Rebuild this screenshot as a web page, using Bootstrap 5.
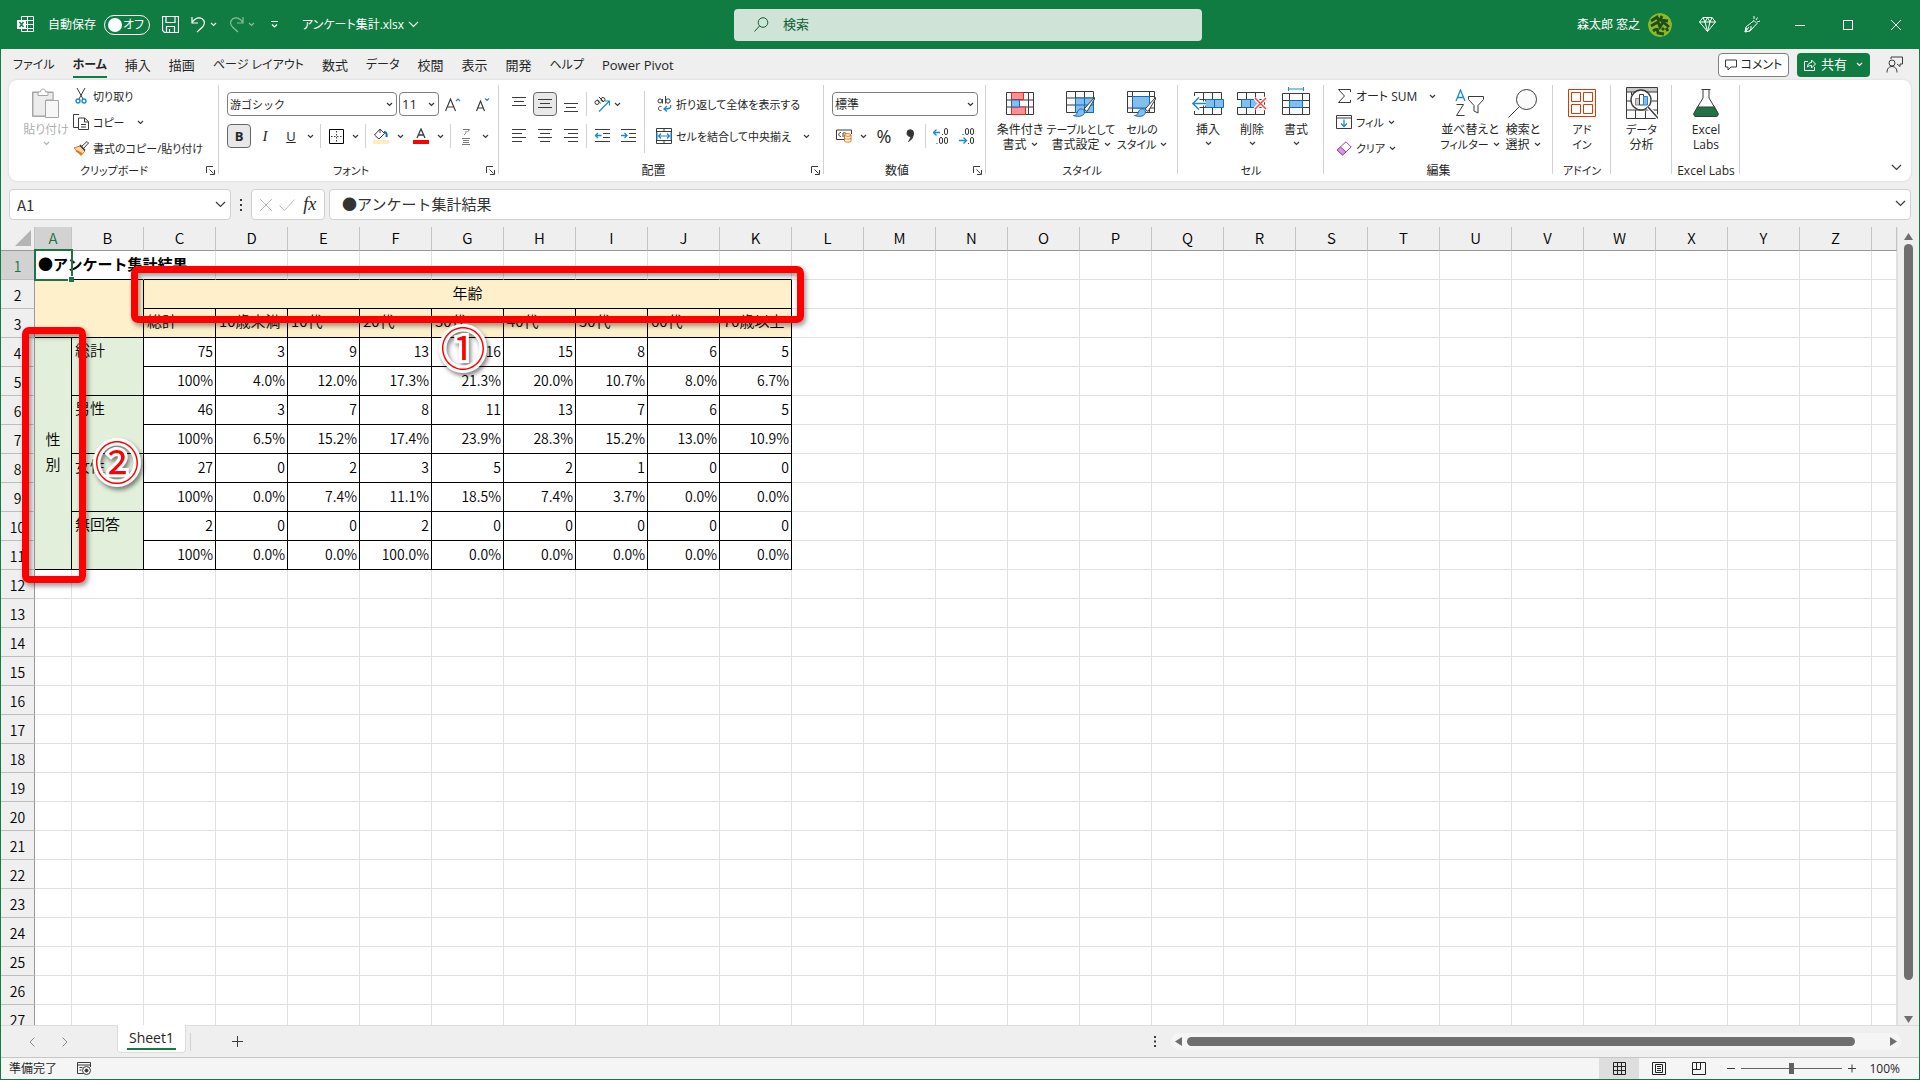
<!DOCTYPE html>
<html lang="ja">
<head>
<meta charset="utf-8">
<meta name="viewport" content="width=device-width, initial-scale=1">
<title>アンケート集計.xlsx</title>
<link href="https://cdn.jsdelivr.net/npm/bootstrap@5.3.0/dist/css/bootstrap.min.css" rel="stylesheet">
<style>
:root{--xl-green:#107c41;--xl-ink:#262626;--xl-chrome:#efefef}
body{font-family:"Open Sans","Noto Sans CJK JP",sans-serif;font-size:12px;line-height:15px;color:var(--xl-ink);font-feature-settings:"palt"}
svg{display:block;flex:none;fill:none;stroke:#3b3b3b}
button{font:inherit;color:inherit}
.app-window{border:solid var(--xl-green);border-width:0 1px 1px;background:var(--xl-chrome)}
.title-bar{height:49px;background:var(--xl-green);color:#fff;margin:0 -1px}
.title-bar svg{stroke:#fff}
.title-side{flex:1 1 0;min-width:0}
.app-mark{margin:0 14px 0 17px}
.quick{margin-left:12px}
.file-name{margin-left:24px}
.plain{border:0;background:none;padding:0;display:inline-flex;align-items:center;justify-content:center;white-space:nowrap}
.auto-pill{width:46px;height:20px;border:1px solid #fff;border-radius:10px;padding:0 5px 0 3px}
.auto-pill input{appearance:none;width:14px;height:14px;border-radius:50%;background:#fff;margin:0}
.search-area{width:468px;height:32px;background:#cfe3d7;border-radius:4px;color:#0c5f32;padding-left:20px;margin-left:16px;gap:14px}
.search-area svg{stroke:#0c5f32}
.search-area input{border:0;background:none;outline:0;color:inherit;font-size:13px;padding:0}
.search-area input::placeholder{color:#0c5f32;opacity:1}
.face{width:24px;height:24px;border-radius:50%}
.pen{width:20px;margin-right:14px}
.cap-btn{width:48px;height:48px}
.tab-bar{height:31px;padding-left:12px;font-size:13px}
.tab-list{gap:18px}
.tab-bar a{color:var(--xl-ink);text-decoration:none;line-height:22px;height:26px;padding-top:2px;white-space:nowrap}
.tab-bar a.current{font-weight:700;border-bottom:2px solid var(--xl-green)}
.tab-bar a.kana{font-size:12px}
.kana-s{font-size:11px}
.pill-btn{height:24px;border-radius:4px}
.comment-btn{width:71px;background:#fff;border:1px solid #7f7f7f;gap:4px;font-size:12px}
.share-btn{width:73px;background:var(--xl-green);color:#fff;gap:5px;font-size:13px}
.share-btn svg{stroke:#fff}
.ribbon{height:101px;margin:0 8px;background:#fff;border-radius:8px;box-shadow:0 0 2px #c8c8c8}
.rgroup{display:flex;flex-direction:column;background:linear-gradient(#d1d1d1,#d1d1d1) no-repeat right 5px/1px 89px;position:relative}
.rbody{height:82px;display:flex}
.pad6{padding-left:6px}.pad8{padding-left:8px}.pad14{padding-left:14px}
.rlabel{height:18px;line-height:18px;text-align:center;white-space:nowrap}
.launch{position:absolute;right:4px;bottom:6px}
.w-clip{width:210px}.w-font{width:280px}.w-align{width:325px}.w-num{width:162px}.w-style{width:192px}.w-cell{width:146px}.w-edit{width:229px}.w-add{width:58px}.w-ana{width:61px}.w-labs{width:68px}
.line-col{display:flex;flex-direction:column;padding-top:3px}
.line-col button{height:26px;justify-content:flex-start}
.ic-slot{width:24px;display:flex;justify-content:center;align-items:center;flex:none}
.gap-caret{margin-left:12px}
.tool-rows{padding:12px 0 0 8px;display:flex;flex-direction:column;gap:8px}
.tool-row{display:flex;gap:2px;height:24px}
.tb{width:24px;height:24px;border-radius:4px}
.tb.on{background:#e8e8e8;border:1px solid #666}
.splitb{width:38px;height:24px;justify-content:flex-start}
.vline{width:1px;background:#d1d1d1;margin:0 1px}
.vtall{width:1px;height:62px;background:#d1d1d1;margin:11px 3px 0 4px}
.combo{appearance:none;height:24px;border:1px solid #7f7f7f;border-radius:4px;font-size:12px;padding:0 12px 0 2px;color:#262626;background:#fff url("data:image/svg+xml,%3Csvg xmlns='http://www.w3.org/2000/svg' width='7' height='5'%3E%3Cpath d='M1 1l2.500 2.500L6 1' fill='none' stroke='%23333' stroke-width='1.200'/%3E%3C/svg%3E") no-repeat right 3px center}
.combo-name{width:170px;font-size:11px}.combo-size{width:40px;font-size:13px}.combo-num{width:146px}
.big{display:flex;flex-direction:column;align-items:center;justify-content:flex-start;padding-top:6px;line-height:15px}
.big .pic{height:34px;display:flex;align-items:center;margin-bottom:2px}
.w46{width:46px}.w44{width:44px}.w50{width:50px}.w52{width:52px}.w56{width:56px}.w66{width:66px}.w110{width:110px}
.dim{color:#b0b0b0}
.formula-row{padding:8px 8px 7px;height:46px}
.fbox{height:31px;background:#fff;border:1px solid #d0d0d0;border-radius:4px}
.fbox input{border:0;outline:0;background:none;color:#333;font-size:15px;padding:0;min-width:0;font-family:"Noto Sans CJK JP",sans-serif;font-feature-settings:normal}
.name-box{width:222px;padding:0 4px 0 7px}
.fx-box{width:74px}
.fx-box button{font:italic 18px "Liberation Serif",serif}
.text-box{margin-left:4px;padding:0 4px 2px 12px}
.sheet-zone{flex:1 1 0;min-height:0;position:relative}
.grid-clip{overflow:hidden;flex:1;min-width:0}
.cells{table-layout:fixed;width:100%;border-collapse:separate;border-spacing:0;font-family:"Noto Sans CJK JP",sans-serif;font-size:14px;line-height:20px;color:#000;font-weight:350;font-feature-settings:normal;background:#fff}
.cells th,.cells td{padding:0;box-sizing:border-box;border:solid #e0e0e0;border-width:0 1px 1px 0;white-space:nowrap}
.cells thead th{height:24px;background:var(--xl-chrome);border-color:#999 #c4c4c4 #999 #999;text-align:center;font-weight:350;font-size:15px;padding-bottom:1px}
.cells tbody tr{height:29px}
.cells tbody th{background:var(--xl-chrome);border-color:#999 #999 #bdbdbd;text-align:center;font-weight:350;padding-top:2px}
.cells .active-h{background:#d2d2d2;color:#217346}
.cells td.num{text-align:right;padding:0 2px 2px 0}
.cells td.bk{border-color:#000}
.cells td.cream,.cells td.green{font-size:15px}
.cells td.top-l{vertical-align:top;padding:2px 0 0 3px}
.cells td.green{background:#e2efda}
.cells td.cream{background:#fff0cc}
.cells td.mid{text-align:center;padding-bottom:2px}
.cells td.stack{text-align:center;line-height:25px;padding-bottom:6px}
.cells td.kline{border-bottom-color:#000}
.cells td.noedge{border-right-color:transparent}
.cells .sel{position:relative;padding:0 0 2px 3px;font-weight:700;font-size:15px;overflow:visible}
.sel::before{content:"";position:absolute;inset:-2px -2px -2px -1px;border:2px solid #217346;z-index:2}
.sel::after{content:"";position:absolute;right:-3px;bottom:-3px;width:6px;height:6px;background:#217346;border:solid #fff;border-width:1px 0 0 1px;z-index:3}
.vscroll{width:21px;display:flex;flex-direction:column;align-items:center;padding:6px 0 2px;gap:4px;border-left:1px solid #e0e0e0;margin-right:1px}
.vthumb{width:9px;height:736px;border-radius:5px;background:#6f6f6f}
.red-frame{position:absolute;border:7px solid #f00;border-radius:7px;box-shadow:2px 3px 5px #0006,inset 2px 3px 5px #0006;z-index:5}
.frame-age{left:130px;top:39px;width:673px;height:57px}
.frame-sex{left:21px;top:100px;width:64px;height:256px}
.callout{position:absolute;z-index:6;width:48px;text-align:center;font:400 45px/48px "Noto Sans CJK JP",sans-serif;color:#f00;-webkit-text-stroke:6px #fff;paint-order:stroke fill;filter:drop-shadow(2px 3px 2px #0007)}
.call-one{left:438px;top:96px}
.call-two{left:92px;top:210px}
.sheet-bar{height:32px;border-top:1px solid #dcdcdc}
.sheet-nav{width:116px;padding-left:28px;gap:27px}
.sheet-tab{width:69px;height:28px;background:#fff;border:1px solid #dcdcdc;border-top:0;border-radius:0 0 4px 4px;margin-top:-1px;font-size:14px;color:var(--xl-ink);text-decoration:none}
.sheet-tab span{border-bottom:2px solid var(--xl-green);padding:0 2px;line-height:20px}
.tab-edge{height:18px;margin-left:4px}
.add-sheet{margin-left:40px}
.hscroll{width:730px;height:17px;background:#f5f5f5;border-radius:9px;margin-right:18px;padding:0 4px}
.hthumb{width:668px;height:9px;border-radius:5px;background:#6f6f6f;margin:0 5px}
.status{height:22px;background:#f5f5f5;border-top:1px solid #c6c6c6;padding:0 19px 0 8px}
.macro{margin-left:20px}
.view{width:40px;height:21px}
.view.on{background:#dedede}
.zoom-range{appearance:none;width:101px;height:13px;margin:0 6px;background:linear-gradient(#666,#666) no-repeat center/100% 1px}
.zoom-range::-webkit-slider-thumb{appearance:none;width:5px;height:11px;background:#616161}
.fold{margin:0 9px 10px 0}
</style>
</head>
<body>
<svg width="0" height="0" class="position-absolute" aria-hidden="true">
  <symbol id="cv" viewBox="0 0 7 5"><path d="M1 1l2.500 2.500L6 1" stroke-width="1.200"/></symbol>
  <symbol id="cvl" viewBox="0 0 11 7"><path d="M1 1l4.500 4.500L10 1" stroke-width="1.200"/></symbol>
  <symbol id="launch" viewBox="0 0 9 9"><path d="M.5 7V.5H7M3.500 3.500l4 4M8.500 4v4.500H4" /></symbol>
  <symbol id="brush" viewBox="0 0 24 22"><path d="M22.500 1.500L12 13l3 2.500L22.500 3z" fill="#fff"/><path d="M1.500 19.500c4 0 3-3 5-5.500 2-2 6-1 6 2 0 4-6 5.500-11 3.500z" fill="#83beec" stroke="#0f6cbd"/></symbol>
</svg>
<div class="app-window vh-100 d-flex flex-column overflow-hidden">

  <header class="title-bar d-flex align-items-center">
    <div class="title-side d-flex align-items-center">
      <svg class="app-mark" width="17" height="17" viewBox="0 0 17 17"><path d="M4.500 4V.5h12v15h-12V13M4.500 4.500h12M8 8.500h8.500M8 12.500h8.500M10.500.5v15"/><path d="M0 4h9v9H0z" fill="#fff" stroke="none"/><path d="M2.500 6l4 5M6.500 6l-4 5" stroke="#107c41" stroke-width="1.400"/></svg>
      <label for="autosave">自動保存</label>
      <label class="auto-pill d-flex align-items-center justify-content-between ms-2"><input id="autosave" type="checkbox" role="switch"><span>オフ</span></label>
      <button class="plain quick" aria-label="上書き保存"><svg width="17" height="17" viewBox="0 0 17 17"><path d="M.5.5h16v16h-14l-2-2zM4 .5v6h9v-6M4.500 16.500v-6h8v6M7.500 16v-3" stroke-width="1.200"/></svg></button>
      <button class="plain quick gap-1" aria-label="元に戻す"><svg width="15" height="17" viewBox="0 0 15 17"><path d="M1 1v6h6M1 6.500C4 2 8 .5 11.500 3c3 2.500 2 6 0 8L6 16" stroke-width="1.200"/></svg><svg width="7" height="5"><use href="#cv"/></svg></button>
      <button class="plain quick gap-1 opacity-50" aria-label="やり直し"><svg width="15" height="17" viewBox="0 0 15 17"><path d="M14 1v6H8M14 6.500C11 2 7 .5 3.500 3c-3 2.500-2 6 0 8L9 16" stroke-width="1.200"/></svg><svg width="7" height="5"><use href="#cv"/></svg></button>
      <button class="plain ms-3" aria-label="クイック アクセス ツール バーのカスタマイズ"><svg width="7" height="8" viewBox="0 0 7 8"><path d="M0 .5h7M1 3.500l2.500 2.500L6 3.500" stroke-width="1.200"/></svg></button>
      <button class="plain gap-1 file-name">アンケート集計.xlsx <svg width="11" height="7"><use href="#cvl"/></svg></button>
    </div>
    <div class="search-area d-flex align-items-center">
      <svg width="15" height="15" viewBox="0 0 15 15"><circle cx="9" cy="5.500" r="4.800"/><path d="M5.500 9L.5 14.500"/></svg>
      <input type="search" placeholder="検索" aria-label="検索">
    </div>
    <div class="title-side d-flex align-items-center justify-content-end">
      <span class="me-2">森太郎 窓之</span>
      <svg class="face" viewBox="0 0 24 24"><circle cx="12" cy="12" r="12" fill="#8cb82b" stroke="none"/><path d="M3 8l6-4 2 4M14 3l-2 4 8 1M3 13l7-4 2 5 3-5 6 5M5 18l3-2M9 15l1 5 6 1M14 15l2 2M18 15l2 3" stroke="#1f4d16" stroke-width="2.800"/></svg>
      <button class="plain" style="width:70px" aria-label="Premium"><svg width="17" height="15" viewBox="0 0 17 15"><path d="M4 .5h9l3.500 4.500-8 9.500L.5 5zM.5 5h16M4 .5L6 5l2.500 9.500L11 5l2-4.500M6 5l2.500-4.500L11 5"/></svg></button>
      <button class="plain pen" aria-label="新機能"><svg width="17" height="17" viewBox="0 0 17 17"><path d="M10 4.500l3 3L6 15l-5 1 1-5zM5 11l-3 4M7 10v3l-2 2M10 3V0M12 4l1.500-2.500M13 6l3-1M1 16l2-4"/></svg></button>
      <button class="plain cap-btn" aria-label="最小化"><svg width="10" height="10" viewBox="0 0 10 10"><path d="M0 5.500h10"/></svg></button>
      <button class="plain cap-btn" aria-label="最大化"><svg width="10" height="10" viewBox="0 0 10 10"><rect x=".5" y=".5" width="9" height="9"/></svg></button>
      <button class="plain cap-btn" aria-label="閉じる"><svg width="10" height="10" viewBox="0 0 10 10"><path d="M0 0l10 10M10 0L0 10"/></svg></button>
    </div>
  </header>

  <nav class="tab-bar d-flex align-items-center" aria-label="リボン タブ">
    <div class="d-flex flex-fill tab-list">
      <a href="#" class="kana">ファイル</a><a href="#" class="current kana">ホーム</a><a href="#">挿入</a><a href="#">描画</a><a href="#" class="kana">ページ レイアウト</a><a href="#">数式</a><a href="#" class="kana">データ</a><a href="#">校閲</a><a href="#">表示</a><a href="#">開発</a><a href="#" class="kana">ヘルプ</a><a href="#">Power Pivot</a>
    </div>
    <button class="plain pill-btn comment-btn me-2"><svg width="12" height="12" viewBox="0 0 12 12"><path d="M.5 1h11v7H6l-3 3V8H.5z"/></svg>コメント</button>
    <button class="plain pill-btn share-btn"><svg width="12" height="13" viewBox="0 0 12 13"><path d="M4 3.500H.5v9h10V9M3.500 9c0-3 2-4.500 4-4.500V2l4 4-4 4V7.500c-2 0-3 .5-4 1.500z"/></svg>共有<svg width="7" height="5" class="ms-1"><use href="#cv"/></svg></button>
    <button class="plain mx-3" aria-label="アカウント"><svg width="17" height="17" viewBox="0 0 17 17"><path d="M5 3V1h11.500v7H14v2.500L11 8"/><circle cx="6" cy="7" r="3"/><path d="M1 16.500c0-4 2-6 5-6s5 2 5 6"/></svg></button>
  </nav>

  <section class="ribbon d-flex" aria-label="リボン">
    <div class="rgroup w-clip">
      <div class="rbody pad14">
        <button class="plain big w46 dim"><span class="pic"><svg width="28" height="30" viewBox="0 0 28 30"><path d="M7 4H.5v24.500H13M14 4h7v8" stroke="#a5a5a5" fill="#eee"/><path d="M1 4.500h20V12h-7v16H1z" fill="#ececec" stroke="#a5a5a5"/><path d="M6 7.500V4h2.500c0-4 5-4 5 0H16v3.500z" fill="#fff" stroke="#a5a5a5"/><path d="M13.500 12.500h13v17h-13z" fill="#f7f7f7" stroke="#a5a5a5"/></svg></span>貼り付け<svg width="7" height="5" class="mt-1" style="stroke:#b0b0b0"><use href="#cv"/></svg></button>
        <div class="line-col kana-s">
          <button class="plain"><span class="ic-slot"><svg width="12" height="16" viewBox="0 0 12 16"><path d="M2 0l6 11M10 0L4 11"/><circle cx="3" cy="13" r="2" stroke="#1e88d2" stroke-width="1.400"/><circle cx="9" cy="13" r="2" stroke="#1e88d2" stroke-width="1.400"/></svg></span>切り取り</button>
          <button class="plain"><span class="ic-slot"><svg width="16" height="16" viewBox="0 0 16 16"><path d="M6 .5H.5v13H5M5.500 4h6l4 3.500v8h-10zM11.500 4v4h4M8 10.500h5M8 13h5"/></svg></span>コピー<svg width="7" height="5" class="gap-caret"><use href="#cv"/></svg></button>
          <button class="plain"><span class="ic-slot"><svg width="16" height="15" viewBox="0 0 16 15"><path d="M8 6l6-5.500L15.500 2 10 8" fill="#fff"/><path d="M1 7l6-2 5 5-4 4.500z" fill="#fbd6b5" stroke="#e8710a"/><path d="M3 9.500l6 3.500" stroke="#e8710a" stroke-width="2"/><path d="M7 4l5 5.500" stroke-width="1.600"/></svg></span>書式のコピー/貼り付け</button>
        </div>
      </div>
      <div class="rlabel kana-s">クリップボード</div><svg class="launch" width="9" height="9"><use href="#launch"/></svg>
    </div>

    <div class="rgroup w-font">
      <div class="rbody"><div class="tool-rows">
        <div class="tool-row">
          <select class="combo combo-name" aria-label="フォント"><option>游ゴシック</option></select>
          <select class="combo combo-size" aria-label="フォント サイズ"><option>11</option></select>
          <button class="plain tb" aria-label="フォント サイズの拡大"><svg width="16" height="15" viewBox="0 0 16 15"><path d="M.5 14L5.500 2l5 12M2 10h7" stroke-width="1.200"/><path d="M11 4l2-2 2 2" stroke="#1e88d2" stroke-width="1.200"/></svg></button>
          <button class="plain tb ms-1" aria-label="フォント サイズの縮小"><svg width="16" height="15" viewBox="0 0 16 15"><path d="M1.500 14L5.500 4l4 10M3 11h5" stroke-width="1.200"/><path d="M10 1.500l2 2 2-2" stroke="#1e88d2" stroke-width="1.200"/></svg></button>
        </div>
        <div class="tool-row">
          <button class="plain tb on fw-bold" style="font-size:13px">B</button>
          <button class="plain tb fst-italic" style="font-size:15px;font-family:'Liberation Serif',serif">I</button>
          <button class="plain splitb"><span class="ic-slot text-decoration-underline" style="font-size:13px">U</span><svg width="7" height="5" class="ms-1"><use href="#cv"/></svg></button>
          <span class="vline"></span>
          <button class="plain splitb" aria-label="罫線"><span class="ic-slot"><svg width="15" height="15" viewBox="0 0 15 15"><path d="M.5.5h14v14H.5z" stroke="#000"/><path d="M7.500 2v12M2 7.500h12" stroke-dasharray="1.500 1.500"/></svg></span><svg width="7" height="5" class="ms-1"><use href="#cv"/></svg></button>
          <span class="vline"></span>
          <button class="plain splitb" aria-label="塗りつぶしの色"><span class="ic-slot"><svg width="16" height="16" viewBox="0 0 16 16"><path d="M7 1L1.500 7 6 11l5.500-5.500zM7 1v4" /><path d="M11 4c2.500 0 3 2 2.500 5" stroke="#0f6cbd" stroke-width="2"/><path d="M0 12h16v4H0z" fill="#ffecc0" stroke="none"/></svg></span><svg width="7" height="5" class="ms-1"><use href="#cv"/></svg></button>
          <button class="plain splitb" aria-label="フォントの色"><span class="ic-slot"><svg width="16" height="16" viewBox="0 0 16 16"><path d="M4 10l4-9 4 9M5.500 7h5" stroke-width="1.300"/><path d="M0 12h16v4H0z" fill="#f00" stroke="none"/></svg></span><svg width="7" height="5" class="ms-1"><use href="#cv"/></svg></button>
          <span class="vline"></span>
          <button class="plain splitb" aria-label="ふりがな"><span class="ic-slot"><svg width="12" height="17" viewBox="0 0 12 17"><path d="M3 1.500h6.500L7.500 4M6 3c0 2-.5 3-2 4M2 10.500h8M3 12.500h6M3 14.500h6M2 16.500h8" stroke="#777"/></svg></span><svg width="7" height="5" class="ms-1"><use href="#cv"/></svg></button>
        </div>
      </div></div>
      <div class="rlabel kana-s pe-3">フォント</div><svg class="launch" width="9" height="9"><use href="#launch"/></svg>
    </div>

    <div class="rgroup w-align">
      <div class="rbody">
        <div class="tool-rows">
          <div class="tool-row">
            <button class="plain tb" aria-label="上揃え"><svg width="14" height="20" viewBox="0 0 14 20"><path d="M0 3.500h14M2 7.500h10M0 11.500h14"/></svg></button>
            <button class="plain tb on" aria-label="上下中央揃え"><svg width="14" height="20" viewBox="0 0 14 20"><path d="M0 5.500h14M2 9.500h10M0 13.500h14"/></svg></button>
            <button class="plain tb" aria-label="下揃え"><svg width="14" height="20" viewBox="0 0 14 20"><path d="M0 9.500h14M2 13.500h10M0 17.500h14"/></svg></button>
            <span class="vline"></span>
            <button class="plain splitb" aria-label="方向"><span class="ic-slot"><svg width="16" height="16" viewBox="0 0 16 16"><circle cx="3" cy="6.500" r="2"/><path d="M3.500 3.500l3 4M5 1l5 5"/><circle cx="9" cy="3.500" r="2"/><path d="M5 15.500L15 5.500M11 5h4.500v4.500" stroke="#1e88d2" stroke-width="1.200"/></svg></span><svg width="7" height="5"><use href="#cv"/></svg></button>
          </div>
          <div class="tool-row">
            <button class="plain tb" aria-label="左揃え"><svg width="14" height="14" viewBox="0 0 14 14"><path d="M0 .5h14M0 4.500h10M0 8.500h14M0 12.500h10"/></svg></button>
            <button class="plain tb" aria-label="中央揃え"><svg width="14" height="14" viewBox="0 0 14 14"><path d="M0 .5h14M2 4.500h10M0 8.500h14M2 12.500h10"/></svg></button>
            <button class="plain tb" aria-label="右揃え"><svg width="14" height="14" viewBox="0 0 14 14"><path d="M0 .5h14M4 4.500h10M0 8.500h14M4 12.500h10"/></svg></button>
            <span class="vline"></span>
            <button class="plain tb" aria-label="インデントを減らす"><svg width="15" height="14" viewBox="0 0 15 14"><path d="M0 .5h15M8 4.500h7M8 8.500h7M0 12.500h15"/><path d="M6.500 6.500h-6M3 4L.5 6.500 3 9" stroke="#1e88d2" stroke-width="1.300"/></svg></button>
            <button class="plain tb" aria-label="インデントを増やす"><svg width="15" height="14" viewBox="0 0 15 14"><path d="M0 .5h15M8 4.500h7M8 8.500h7M0 12.500h15"/><path d="M0 6.500h6M3.500 4L6 6.500 3.500 9" stroke="#1e88d2" stroke-width="1.300"/></svg></button>
          </div>
        </div>
        <span class="vtall"></span>
        <div class="tool-rows kana-s ps-1">
          <button class="plain justify-content-start" style="height:24px"><span class="ic-slot"><svg width="15" height="16" viewBox="0 0 15 16"><circle cx="3" cy="5" r="2"/><path d="M5.500 3v4.500M8.500 0v7.500M4.500 10.500c-4-1-4 5 0 4"/><circle cx="11" cy="5" r="2.200"/><path d="M13.500 9c1 3-1 4-6 4M10 10l-3 3 3 2.500" stroke="#1e88d2" stroke-width="1.300"/></svg></span>折り返して全体を表示する</button>
          <button class="plain justify-content-start" style="height:24px"><span class="ic-slot"><svg width="16" height="16" viewBox="0 0 16 16"><path d="M.5.5h15v15H.5zM8 .5v3M8 12.500v3M0 3.500h16M0 12.500h16"/><path d="M3 8h10M5 5.500L2.500 8 5 10.500M11 5.500L13.500 8 11 10.500M1 4.500v7M15 4.500v7" stroke="#1e88d2" stroke-width="1.200"/></svg></span>セルを結合して中央揃え<svg width="7" height="5" class="gap-caret"><use href="#cv"/></svg></button>
        </div>
      </div>
      <div class="rlabel pe-3">配置</div><svg class="launch" width="9" height="9"><use href="#launch"/></svg>
    </div>

    <div class="rgroup w-num">
      <div class="rbody"><div class="tool-rows">
        <div class="tool-row"><select class="combo combo-num" aria-label="表示形式"><option>標準</option></select></div>
        <div class="tool-row">
          <button class="plain splitb" aria-label="通貨表示形式"><span class="ic-slot"><svg width="17" height="14" viewBox="0 0 17 14"><path d="M8 10.500H.5V1h15v4M5 3.500c-3 0-3 4 0 4M7 8V4c3-1 3 1 3 1"/><path d="M8.500 6v6c0 1.500 6.500 1.500 6.500 0V6M8.500 9c0 1.500 6.500 1.500 6.500 0" stroke="#e8710a" fill="#fff"/><ellipse cx="11.750" cy="6" rx="3.300" ry="1.300" stroke="#e8710a"/></svg></span><svg width="7" height="5" class="ms-1"><use href="#cv"/></svg></button>
          <button class="plain tb" style="font-size:18px" aria-label="パーセント">%</button>
          <button class="plain tb" aria-label="桁区切り"><svg width="9" height="14" viewBox="0 0 9 14"><path d="M1 4a3.200 3.200 0 1 1 6.500 0c0 4-2 7-5 8.500 1.500-2 2-3 2-5C2 7.500 1 6 1 4z" fill="#333"/></svg></button>
          <span class="vline"></span>
          <button class="plain tb" aria-label="小数点以下の桁数を増やす"><svg width="16" height="16" viewBox="0 0 16 16"><path d="M7 4.500H.5M3.500 1.500l-3 3 3 3" stroke="#1e88d2" stroke-width="1.300"/><rect x="11.500" y=".5" width="3" height="6" rx="1.500"/><rect x="6.500" y="9.500" width="3" height="6" rx="1.500"/><rect x="11.500" y="9.500" width="3" height="6" rx="1.500"/><path d="M9 6.500h1M3.500 15.500h1"/></svg></button>
          <button class="plain tb" aria-label="小数点以下の桁数を減らす"><svg width="16" height="16" viewBox="0 0 16 16"><path d="M0 12.500h7.500M4.500 9.500l3 3-3 3" stroke="#1e88d2" stroke-width="1.300"/><rect x="6.500" y=".5" width="3" height="6" rx="1.500"/><rect x="11.500" y=".5" width="3" height="6" rx="1.500"/><rect x="11.500" y="9.500" width="3" height="6" rx="1.500"/><path d="M3.500 6.500h1M9 15.500h1"/></svg></button>
        </div>
      </div></div>
      <div class="rlabel pe-3">数値</div><svg class="launch" width="9" height="9"><use href="#launch"/></svg>
    </div>

    <div class="rgroup w-style">
      <div class="rbody pad6">
        <button class="plain big w56"><span class="pic"><svg width="28" height="23" viewBox="0 0 28 23"><path d="M.5.5h27v22H.5zM0 8h28M0 15h28M5.500 0v23M22.500 0v23" fill="#fafafa"/><path d="M5.500.5h12v7h-12zM5.500 15h14v7.500h-14z" fill="#ff8f94" stroke="#d92c20"/><path d="M5.500 8h8v7h-8z" fill="#83beec" stroke="#0f6cbd"/></svg></span>条件付き<span class="d-flex align-items-center">書式<svg width="7" height="5" class="ms-1"><use href="#cv"/></svg></span></button>
        <button class="plain big w66"><span class="pic"><svg width="31" height="28" viewBox="0 0 31 28"><path d="M.5 2.500h27v21H.5zM0 9h28M0 16h28M9.500 3v20M18.500 3v20" fill="#fafafa"/><path d="M9.500 9h18v14.500h-18zM18.500 9v14M9.500 16h18" fill="#83beec" stroke="#0f6cbd"/><use href="#brush" x="6" y="7" width="24" height="22"/></svg></span><span class="kana-s">テーブルとして</span><span class="d-flex align-items-center">書式設定<svg width="7" height="5" class="ms-1"><use href="#cv"/></svg></span></button>
        <button class="plain big w56"><span class="pic"><svg width="31" height="28" viewBox="0 0 31 28"><path d="M.5 2.500h27v21H.5zM0 7.500h28M0 19h28M5.500 3v20M22.500 3v20" fill="#fafafa"/><path d="M5.500 7.500h17V19h-17z" fill="#83beec" stroke="#0f6cbd"/><use href="#brush" x="6" y="7" width="24" height="22"/></svg></span><span class="kana-s">セルの</span><span class="d-flex align-items-center kana-s">スタイル<svg width="7" height="5" class="ms-1"><use href="#cv"/></svg></span></button>
      </div>
      <div class="rlabel kana-s">スタイル</div>
    </div>

    <div class="rgroup w-cell">
      <div class="rbody pad8">
        <button class="plain big w44"><span class="pic"><svg width="32" height="23" viewBox="0 0 32 23"><path d="M2.500.5h27v22h-27zM2 7.500h28M2 15.500h28M11.500 0v23M20.500 0v23" fill="#fafafa"/><path d="M13.500 7.500h18v8h-18zM22.500 8v7" fill="#83beec" stroke="#0f6cbd"/><path d="M0 4h7v3H2v8h5v4H0z" fill="#fff" stroke="none"/><path d="M14 11.500H1M7 5L.8 11.500 7 18" stroke="#fff" stroke-width="4"/><path d="M14 11.500H1M7 5.500L.8 11.500l6.200 6" stroke="#1e88d2" stroke-width="1.500"/></svg></span>挿入<svg width="7" height="5" class="mt-1"><use href="#cv"/></svg></button>
        <button class="plain big w44"><span class="pic"><svg width="30" height="23" viewBox="0 0 30 23"><path d="M.5 7.500V.5h27v22H.5v-7M0 7.500h28M0 15.500h28M9.500 0v23M18.500 0v23" fill="#fafafa"/><path d="M4.500 7.500h14l3 4-3 4h-14zM13.500 8v7" fill="#83beec" stroke="#0f6cbd"/><path d="M18 6l11 11M29 6L18 17" stroke="#fff" stroke-width="4"/><path d="M18 6l11 11M29 6L18 17" stroke="#f04b4b" stroke-width="1.500"/></svg></span>削除<svg width="7" height="5" class="mt-1"><use href="#cv"/></svg></button>
        <button class="plain big w44"><span class="pic"><svg width="28" height="32" viewBox="0 0 28 32"><path d="M.5 6.500h27v21H.5zM0 13.500h28M0 20.500h28M7.500 7v20M20.500 7v20" fill="#fafafa"/><path d="M7.500 13.500h13v7h-13z" fill="#83beec" stroke="#0f6cbd"/><path d="M6.500 0v4M21.500 0v4M6.500 2h15" stroke="#1e88d2"/></svg></span>書式<svg width="7" height="5" class="mt-1"><use href="#cv"/></svg></button>
      </div>
      <div class="rlabel kana-s">セル</div>
    </div>

    <div class="rgroup w-edit">
      <div class="rbody pad8">
        <div class="line-col w110">
          <button class="plain"><span class="ic-slot"><svg width="13" height="14" viewBox="0 0 13 14"><path d="M12.500 3V.5h-12l6 6.500-6 6.500h12V11"/></svg></span>オート SUM<svg width="7" height="5" class="gap-caret"><use href="#cv"/></svg></button>
          <button class="plain"><span class="ic-slot"><svg width="16" height="14" viewBox="0 0 16 14"><path d="M.5.500h15v13H.5zM.5 3h15"/><path d="M8 4.500V11M5 8.500L8 11.500l3-3" stroke="#1e88d2" stroke-width="1.300"/></svg></span><span class="kana-s">フィル</span><svg width="7" height="5" class="ms-1"><use href="#cv"/></svg></button>
          <button class="plain"><span class="ic-slot"><svg width="16" height="15" viewBox="0 0 16 15"><path d="M10 .8L15.200 6 6.500 14 1 9z" stroke="#a33ab5" fill="#fff"/><path d="M4.500 6L10 11l-3.500 3L1 9z" fill="#d59be0" stroke="#a33ab5"/></svg></span><span class="kana-s">クリア</span><svg width="7" height="5" class="ms-1"><use href="#cv"/></svg></button>
        </div>
        <button class="plain big w56"><span class="pic"><svg width="30" height="28" viewBox="0 0 30 28"><path d="M1 12L5.500 1 10 12M2.500 8.500h6" stroke="#1e88d2" stroke-width="1.300"/><path d="M1.500 15.500h7l-7 11h8M13.500 7.500h15v3l-5.500 6V24l-4-2v-5.500l-5.500-6z"/></svg></span>並べ替えと<span class="d-flex align-items-center kana-s">フィルター<svg width="7" height="5" class="ms-1"><use href="#cv"/></svg></span></button>
        <button class="plain big w50"><span class="pic"><svg width="30" height="29" viewBox="0 0 30 29"><circle cx="18.500" cy="10.500" r="10" fill="#fafafa"/><path d="M11.500 17.500L.5 28.500"/></svg></span>検索と<span class="d-flex align-items-center">選択<svg width="7" height="5" class="ms-1"><use href="#cv"/></svg></span></button>
      </div>
      <div class="rlabel">編集</div>
    </div>

    <div class="rgroup w-add">
      <div class="rbody justify-content-center"><button class="plain big w50"><span class="pic"><svg width="28" height="28" viewBox="0 0 28 28"><path d="M.5.5h27v27H.5zM3.500 3.500h9v9h-9zM15.500 3.500h9v9h-9zM3.500 15.500h9v9h-9zM15.500 15.500h9v9h-9z" stroke="#d83b01"/></svg></span><span class="kana-s">アド</span><span class="kana-s">イン</span></button></div>
      <div class="rlabel kana-s">アドイン</div>
    </div>
    <div class="rgroup w-ana">
      <div class="rbody justify-content-center"><button class="plain big w50"><span class="pic"><svg width="32" height="32" viewBox="0 0 32 32"><path d="M.5.5h31v31H.5z" fill="#fafafa"/><path d="M1 1h30v4H1z" fill="#c8c8c8" stroke="none"/><path d="M0 5h32M0 14h5M26 14h6M0 23h32M9.500 23v8M19.500 24v7M5.500 5v3"/><circle cx="15" cy="13" r="10" fill="#fff" stroke-width="1.400"/><path d="M9.500 11.500h4V18h-4z" fill="#ccc" stroke="#888"/><path d="M13.500 7.500h4V18h-4z" fill="#fff"/><path d="M17.500 9.500h4V18h-4z" fill="#83beec" stroke="#1e88d2"/><path d="M22 20l10 11" stroke="#fff" stroke-width="4"/><path d="M22 20l10 11" stroke-width="1.500"/></svg></span><span class="kana-s">データ</span><span>分析</span></button></div>
    </div>
    <div class="rgroup w-labs">
      <div class="rbody justify-content-center"><button class="plain big w50"><span class="pic"><svg width="26" height="28" viewBox="0 0 26 28"><path d="M4 18h18l3 6c1 2-.5 3.500-2 3.500H3c-1.500 0-3-1.500-2-3.500z" fill="#217346" stroke="none"/><path d="M8.500.5h9M10 1v8L1 24c-1 2 .5 3.500 2 3.500h20c1.500 0 3-1.500 2-3.500L16 9V1M4 18h18"/></svg></span>Excel<span>Labs</span></button></div>
      <div class="rlabel">Excel Labs</div>
    </div>
    <button class="plain ms-auto align-self-end fold" aria-label="リボンを折りたたむ"><svg width="11" height="7"><use href="#cvl"/></svg></button>
  </section>

  <div class="formula-row d-flex align-items-center">
    <div class="fbox name-box d-flex align-items-center"><input class="flex-fill" value="A1" aria-label="名前ボックス"><svg width="11" height="7"><use href="#cvl"/></svg></div>
    <svg width="20" height="12" viewBox="0 0 20 12"><path d="M9 1h2M9 6h2M9 11h2" stroke-width="2"/></svg>
    <div class="fbox fx-box d-flex align-items-center justify-content-around px-1">
      <svg width="12" height="12" viewBox="0 0 12 12"><path d="M0 0l12 12M12 0L0 12" stroke="#bbb"/></svg>
      <svg width="16" height="12" viewBox="0 0 16 12"><path d="M.5 6.500l5 5L15.500.5" stroke="#bbb"/></svg>
      <button class="plain" aria-label="関数の挿入">fx</button>
    </div>
    <div class="fbox text-box d-flex align-items-center flex-fill"><input class="flex-fill" value="●アンケート集計結果" aria-label="数式バー"><svg width="11" height="7"><use href="#cvl"/></svg></div>
  </div>

  <main class="sheet-zone d-flex">
    <div class="grid-clip"><table class="cells" id="cells"></table></div>
    <div class="vscroll">
      <svg width="9" height="7" viewBox="0 0 9 7"><path d="M4.500 0L9 7H0z" fill="#6f6f6f" stroke="none"/></svg>
      <div class="vthumb"></div>
      <svg class="mt-auto" width="9" height="7" viewBox="0 0 9 7"><path d="M4.500 7L9 0H0z" fill="#6f6f6f" stroke="none"/></svg>
    </div>
    <div class="red-frame frame-age"></div>
    <div class="red-frame frame-sex"></div>
    <div class="callout call-one">①</div>
    <div class="callout call-two">②</div>
  </main>

  <div class="sheet-bar d-flex">
    <div class="sheet-nav d-flex align-items-center">
      <svg width="6" height="10" viewBox="0 0 6 10"><path d="M5.500.5L1 5l4.500 4.500" stroke="#8a8a8a"/></svg>
      <svg width="6" height="10" viewBox="0 0 6 10"><path d="M.5.5L5 5 .5 9.500" stroke="#8a8a8a"/></svg>
    </div>
    <a href="#" class="sheet-tab d-flex justify-content-center align-items-center"><span>Sheet1</span></a>
    <span class="vline tab-edge align-self-center"></span>
    <button class="plain add-sheet" aria-label="新しいシート"><svg width="11" height="11" viewBox="0 0 11 11"><path d="M5.500 0v11M0 5.500h11"/></svg></button>
    <div class="ms-auto d-flex align-items-center">
      <svg width="32" height="11" viewBox="0 0 32 11"><path d="M15 1h2M15 5.500h2M15 10h2" stroke-width="2"/></svg>
      <div class="hscroll d-flex align-items-center">
        <svg width="7" height="9" viewBox="0 0 7 9"><path d="M0 4.500L7 0v9z" fill="#6f6f6f" stroke="none"/></svg>
        <div class="hthumb"></div>
        <svg class="ms-auto" width="7" height="9" viewBox="0 0 7 9"><path d="M7 4.500L0 0v9z" fill="#6f6f6f" stroke="none"/></svg>
      </div>
    </div>
  </div>

  <footer class="status d-flex align-items-center">
    <span>準備完了</span>
    <svg class="macro" width="14" height="13" viewBox="0 0 14 13"><path d="M6 11.500H.5V.5h13V5M.5 3h13M2.500 5.500h3M2.500 8h2"/><circle cx="9.500" cy="8.500" r="4" fill="#f5f5f5"/><circle cx="9.500" cy="8.500" r="1.500" fill="#333"/></svg>
    <div class="ms-auto d-flex align-items-center">
      <button class="plain view on" aria-label="標準"><svg width="13" height="13" viewBox="0 0 13 13"><path d="M.5.5h12v12H.5zM4.500 0v13M8.500 0v13M0 4.500h13M0 8.500h13" stroke="#222"/></svg></button>
      <button class="plain view" aria-label="ページ レイアウト表示"><svg width="14" height="13" viewBox="0 0 14 13"><path d="M.5.5h13v12H.5zM3.500 2.500h7v8h-7zM5 4.500h4M5 6.500h4M5 8.500h4" stroke="#222"/></svg></button>
      <button class="plain view" aria-label="改ページ プレビュー"><svg width="14" height="13" viewBox="0 0 14 13"><path d="M.5.5h13v12H.5zM4.500 0v7M.5 7.500h8V.5" stroke="#222"/></svg></button>
      <svg width="8" height="9" viewBox="0 0 8 9" class="ms-2"><path d="M0 4.500h8"/></svg>
      <input type="range" class="zoom-range" min="0" max="200" value="100" aria-label="ズーム">
      <svg width="8" height="9" viewBox="0 0 8 9"><path d="M0 4.500h8M4 .5v8"/></svg>
      <span style="width:44px" class="text-end">100%</span>
    </div>
  </footer>
</div>
<script src="https://cdn.jsdelivr.net/npm/bootstrap@5.3.0/dist/js/bootstrap.bundle.min.js"></script>
<script>
const ages = ['総計', '10歳未満', '10代', '20代', '30代', '40代', '50代', '60代', '70歳以上'];
const groups = ['総計', '男性', '女性', '無回答'];
const data = [
  [75, 3, 9, 13, 16, 15, 8, 6, 5],
  ['100%', '4.0%', '12.0%', '17.3%', '21.3%', '20.0%', '10.7%', '8.0%', '6.7%'],
  [46, 3, 7, 8, 11, 13, 7, 6, 5],
  ['100%', '6.5%', '15.2%', '17.4%', '23.9%', '28.3%', '15.2%', '13.0%', '10.9%'],
  [27, 0, 2, 3, 5, 2, 1, 0, 0],
  ['100%', '0.0%', '7.4%', '11.1%', '18.5%', '7.4%', '3.7%', '0.0%', '0.0%'],
  [2, 0, 0, 2, 0, 0, 0, 0, 0],
  ['100%', '0.0%', '0.0%', '100.0%', '0.0%', '0.0%', '0.0%', '0.0%', '0.0%']
];
const letters = [...'ABCDEFGHIJKLMNOPQRSTUVWXYZ'];
const blank = n => '<td></td>'.repeat(n);
let html = '<colgroup><col style="width:34px"><col style="width:37px">' + '<col style="width:72px">'.repeat(25) + '<col></colgroup>';
html += '<thead><tr><th><svg class="ms-auto" style="margin-right:3px" width="16" height="16" viewBox="0 0 16 16"><path d="M16 0v16H0z" fill="#b4b4b4" stroke="none"/></svg></th>' +
  letters.map((l, i) => `<th class="${i ? '' : 'active-h'}">${l}</th>`).join('') + '<th></th></tr></thead><tbody>';
for (let r = 1; r <= 27; r++) {
  html += `<tr><th class="${r === 1 ? 'active-h' : ''}">${r}</th>`;
  if (r === 1) {
    html += '<td class="sel noedge kline">●アンケート集計結果</td><td class="noedge kline"></td>' + '<td class="kline"></td>'.repeat(9) + blank(16);
  } else if (r === 2) {
    html += '<td class="cream bk" colspan="2" rowspan="2"></td><td class="cream bk mid" colspan="9">年齢</td>' + blank(16);
  } else if (r === 3) {
    html += ages.map(a => `<td class="cream bk top-l">${a}</td>`).join('') + blank(16);
  } else if (r <= 11) {
    if (r === 4) html += '<td class="green bk stack" rowspan="8">性<br>別</td>';
    if (r % 2 === 0) html += `<td class="green bk top-l" rowspan="2">${groups[(r - 4) / 2]}</td>`;
    html += data[r - 4].map(v => `<td class="bk num">${v}</td>`).join('') + blank(16);
  } else {
    html += blank(27);
  }
  html += '</tr>';
}
document.getElementById('cells').innerHTML = html + '</tbody>';
</script>
</body>
</html>
